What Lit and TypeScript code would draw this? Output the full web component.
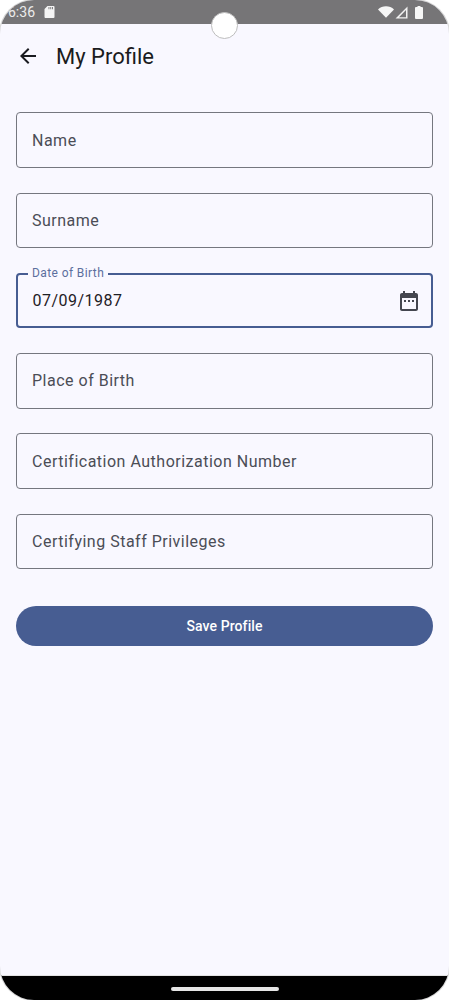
import { LitElement, html, css } from "lit";
import { customElement } from "lit/decorators.js";

@customElement("app-root")
export class AppRoot extends LitElement {
  static styles = css`
    :host { display: block; width: 449px; height: 1000px; background: #fff; position: relative; font-family: Roboto, "Liberation Sans", sans-serif; overflow: hidden; }
    .screen { width: 449px; height: 1000px; border-radius: 34px; overflow: hidden; display: flex; flex-direction: column; background: #f9f8ff; box-sizing: border-box; box-shadow: 0 0 0 1px #d8d8d8; }
    .status { height: 24px; flex: none; background: #767577; color: #ececec; display: flex; align-items: center; padding: 0 26px 0 8px; font-size: 14px; gap: 9px; }
    .spacer { flex: 1; }
    .status svg { display: block; }
    .sysicons { display: flex; align-items: center; gap: 1px; }
    .hole { position: absolute; left: 211px; top: 12px; width: 27px; height: 27px; border-radius: 50%; background: #fff; border: 1px solid #bdbdbd; box-sizing: border-box; }
    .bar { height: 64px; flex: none; display: flex; align-items: center; padding-left: 16px; gap: 16px; color: #1a1b20; font-size: 22px; }
    .bar svg { display: block; }
    .form { flex: 1; padding: 24.4px 16px 0; display: flex; flex-direction: column; gap: 24.65px; }
    .field { height: 55.6px; box-sizing: border-box; border: 1px solid #75777f; border-radius: 4px; display: flex; align-items: center; padding: 0 11px 0 15px; font-size: 16px; letter-spacing: .5px; color: #4b4d56; position: relative; }
    .field.focus { border: 2px solid #475d92; padding: 0 10px 0 14.4px; color: #1f2025; }
    .legend { position: absolute; left: 10px; top: -10px; padding: 0 4px; background: #f9f8ff; font-size: 12px; line-height: 16px; color: #5c6f9e; letter-spacing: .4px; }
    .save { margin-top: 12px; height: 40px; flex: none; border: 0; border-radius: 20px; background: #475d92; color: #fff; font: 500 14px Roboto, "Liberation Sans", sans-serif; letter-spacing: .1px; }
    .nav { height: 24px; flex: none; background: #000; border-top: 1px solid #e3e3e3; display: flex; align-items: center; justify-content: center; }
    .pill { width: 108px; height: 4px; border-radius: 2px; background: #e6e6e6; margin-top: 1px; }
  `;

  render() {
    const fields = ["Name", "Surname"];
    const rest = ["Place of Birth", "Certification Authorization Number", "Certifying Staff Privileges"];
    return html`
      <div class="screen">
        <div class="status">
          <span>6:36</span>
          <svg width="11" height="14" viewBox="0 0 11 13"><path fill="#f4f4f4" fill-rule="evenodd" d="M3.500.5H9.500A1 1 0 0 1 10.500 1.500V11.500A1 1 0 0 1 9.500 12.500H1.500A1 1 0 0 1 .5 11.500V3.500ZM4.500 1.500V3.800H5.400V1.500ZM6.300 1.500V3.800H7.200V1.500ZM8.100 1.500V3.800H9V1.500Z"/></svg>
          <div class="spacer"></div>
          <div class="sysicons">
            <svg width="16" height="12" viewBox="0 0 16 12"><path fill="#f6f6f6" d="M0 3.500C2 1.400 5 .3 8 .3S14 1.400 16 3.500L8 11.800Z"/></svg>
            <svg width="13" height="13" viewBox="0 0 13 13"><path fill="#f2f2f2" fill-rule="evenodd" d="M12.500.5V12.500H.5ZM11 4 4 11.200H11Z"/></svg>
            <svg width="8" height="13" viewBox="0 0 8 13" style="margin-left:6px"><path fill="#f6f6f6" d="M2.500 0H5.500V1H7A1 1 0 0 1 8 2V12A1 1 0 0 1 7 13H1A1 1 0 0 1 0 12V2A1 1 0 0 1 1 1H2.500Z"/></svg>
          </div>
        </div>
        <div class="bar">
          <svg width="24" height="24" viewBox="0 0 24 24"><path fill="#1a1b20" d="M20 11H7.830l5.590-5.590L12 4l-8 8 8 8 1.410-1.410L7.830 13H20z"/></svg>
          <span>My Profile</span>
        </div>
        <div class="form">
          ${fields.map((f) => html`<div class="field">${f}</div>`)}
          <div class="field focus">
            <span class="legend">Date of Birth</span>
            <span>07/09/1987</span>
            <div class="spacer"></div>
            <svg width="24" height="24" viewBox="0 0 24 24"><path fill="#44464f" d="M19 4h-1V2h-2v2H8V2H6v2H5c-1.110 0-2 .9-2 2v14c0 1.100.89 2 2 2h14c1.100 0 2-.9 2-2V6c0-1.100-.9-2-2-2zm0 16H5V9h14v11zM7 11h2v2H7zm4 0h2v2h-2zm4 0h2v2h-2z"/></svg>
          </div>
          ${rest.map((f) => html`<div class="field">${f}</div>`)}
          <button class="save">Save Profile</button>
        </div>
        <div class="nav"><div class="pill"></div></div>
      </div>
      <div class="hole"></div>
    `;
  }
}
